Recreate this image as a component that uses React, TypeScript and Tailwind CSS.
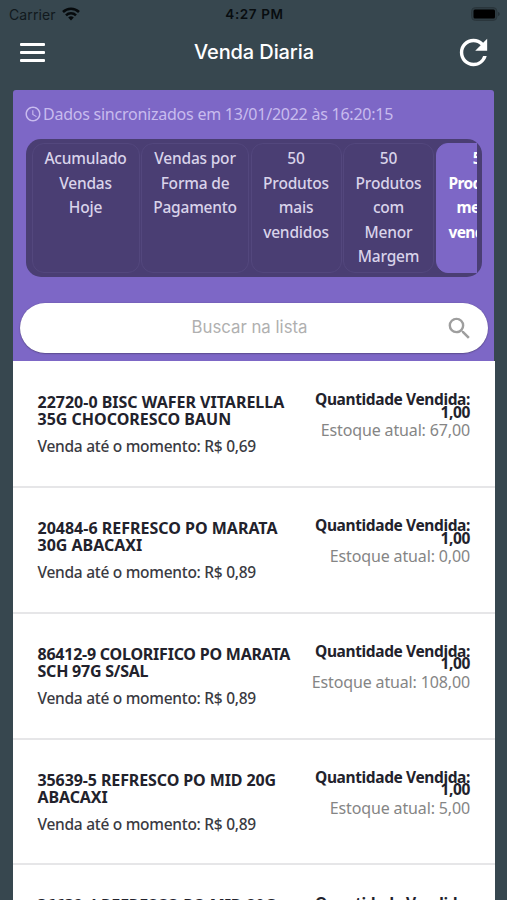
import clsx from "clsx";
import { MdAccessTime, MdRefresh, MdSearch } from "react-icons/md";

type Product = {
  name: [string, string];
  sold: string;
  quantity: string;
  stock: string;
  tracking?: string;
};

const tabs = [
  { lines: ["Acumulado", "Vendas", "Hoje"], width: "w-[108px]" },
  { lines: ["Vendas por", "Forma de", "Pagamento"], width: "w-[108px]" },
  { lines: ["50", "Produtos", "mais", "vendidos"], width: "w-[91px]" },
  { lines: ["50", "Produtos", "com", "Menor", "Margem"], width: "w-[91px]" },
  { lines: ["50", "Produtos", "menos", "vendidos"], width: "w-[91px]", active: true },
];

const products: Product[] = [
  { name: ["22720-0 BISC WAFER VITARELLA", "35G CHOCORESCO BAUN"], sold: "0,69", quantity: "1,00", stock: "67,00" },
  { name: ["20484-6 REFRESCO PO MARATA", "30G ABACAXI"], sold: "0,89", quantity: "1,00", stock: "0,00" },
  {
    name: ["86412-9 COLORIFICO PO MARATA", "SCH 97G S/SAL"],
    sold: "0,89",
    quantity: "1,00",
    stock: "108,00",
    tracking: "tracking-[-0.23px]",
  },
  {
    name: ["35639-5 REFRESCO PO MID 20G", "ABACAXI"],
    sold: "0,89",
    quantity: "1,00",
    stock: "5,00",
    tracking: "tracking-[-0.1px]",
  },
  {
    name: ["36639-4 REFRESCO PO MID 20G", "ABACAXI"],
    sold: "0,89",
    quantity: "1,00",
    stock: "5,00",
    tracking: "tracking-[-0.1px]",
  },
];

function WifiIcon() {
  return (
    <svg width="18" height="14" viewBox="0 0 18 14" fill="none" stroke="#060a0c" strokeWidth="2.5">
      <path d="M1 5a11.4 11.4 0 0 1 16 0" />
      <path d="M4 8.3a7.1 7.1 0 0 1 10 0" />
      <path d="M9 13.4 6.2 10.6a4 4 0 0 1 5.6 0z" fill="#060a0c" stroke="none" />
    </svg>
  );
}

function BatteryIcon() {
  return (
    <svg width="29" height="14" viewBox="0 0 29 14">
      <rect x="0.5" y="0.5" width="25.5" height="13" rx="4" fill="#2f3c43" stroke="#2a363c" />
      <rect x="2.5" y="2.5" width="21.5" height="9" rx="1.5" fill="#000" />
      <path d="M27.2 5v4c.9-.4 1.4-1.1 1.4-2s-.5-1.6-1.4-2z" fill="#222d33" />
    </svg>
  );
}

function StatusBar() {
  return (
    <div className="grid h-7 grid-cols-3 items-center pr-[7px] pl-[9px] font-['Inter',sans-serif] text-[14px]">
      <div className="flex items-center gap-[6px] text-[#11191d]">
        <span className="tracking-[0.1px]">Carrier</span>
        <WifiIcon />
      </div>
      <span className="text-center text-[13.5px] font-semibold tracking-[0.6px] text-[#080d10]">4:27 PM</span>
      <div className="flex justify-end">
        <BatteryIcon />
      </div>
    </div>
  );
}

function Header() {
  return (
    <header className="flex h-[62px] items-start justify-between pr-[13px] pl-[20px]">
      <button className="mt-[15px] flex w-[25px] flex-col gap-[5px]" aria-label="Menu">
        <span className="h-[3px] rounded-[1px] bg-white" />
        <span className="h-[3px] rounded-[1px] bg-white" />
        <span className="h-[3px] rounded-[1px] bg-white" />
      </button>
      <h1 className="mt-[10px] ml-[10px] font-['Inter',sans-serif] text-[20px] leading-7 font-medium tracking-[-0.1px] text-white">
        Venda Diaria
      </h1>
      <button className="mt-1" aria-label="Atualizar">
        <MdRefresh size={41} color="#fff" />
      </button>
    </header>
  );
}

function Tabs() {
  return (
    <div className="mx-[12.5px] mt-[13px] h-[138px] overflow-hidden rounded-[15px] bg-[#4a3e73] pt-1 pr-[4.5px] pl-[6px]">
      <div className="flex gap-[1.5px] overflow-hidden">
        {tabs.map((tab) => (
          <button
            key={tab.lines.join(" ")}
            className={clsx(
              "flex h-[130px] shrink-0 flex-col items-center rounded-xl border pt-[2px] text-[15.5px] leading-[24.5px]",
              tab.width,
              tab.active
                ? "border-[#7d67c6] bg-[#7d67c6] font-bold tracking-[-0.6px] text-white"
                : "border-[#53477d] font-medium tracking-[-0.2px] text-[#d9d3ea]",
            )}
          >
            {tab.lines.map((line) => (
              <span key={line}>{line}</span>
            ))}
          </button>
        ))}
      </div>
    </div>
  );
}

function SearchField() {
  return (
    <div className="mx-[6.5px] mt-[26px] flex h-[50px] items-center rounded-full bg-white pr-[14px] pl-[35px] shadow-[0_0.5px_1.5px_rgba(0,0,0,0.45)]">
      <input
        className="min-w-0 flex-1 pb-px text-center font-['Inter',sans-serif] text-[16.8px] outline-none placeholder:text-[#b0b0b0]"
        placeholder="Buscar na lista"
      />
      <MdSearch size={29} color="#9e9e9e" />
    </div>
  );
}

function ProductRow({ product }: { product: Product }) {
  return (
    <li className="flex h-[125.86px] justify-between border-b-2 border-[#e6e6e8] px-[25px]">
      <div className="pt-8 whitespace-nowrap text-[#22222c]">
        <p className={clsx("text-[16px] leading-[17px] font-bold", product.tracking)}>
          {product.name[0]}
          <br />
          {product.name[1]}
        </p>
        <p className="mt-[6px] text-[15.5px] leading-6 font-medium tracking-[-0.28px] text-[#3a3a42]">
          Venda até o momento: R$ {product.sold}
        </p>
      </div>
      <div className="pt-[31.2px] text-right whitespace-nowrap">
        <p className="text-[15.5px] leading-[12.5px] font-bold tracking-[-0.38px] text-[#22222c]">
          Quantidade Vendida:
          <br />
          {product.quantity}
        </p>
        <p className="text-[16px] leading-6 tracking-[-0.14px] text-[#858585]">Estoque atual: {product.stock}</p>
      </div>
    </li>
  );
}

export default function App() {
  return (
    <main className="h-[900px] w-[507px] overflow-hidden bg-[#37474f] font-['Noto_Sans',sans-serif]">
      <StatusBar />
      <Header />
      <section className="mx-[13px] h-[271px] rounded-t-[3px] bg-[#7d67c6] pt-[13px]">
        <p className="flex items-center gap-px pl-[11px] text-[16px] leading-[23px] tracking-[-0.24px] text-[#c8bbee]">
          <MdAccessTime size={18} className="-mt-0.5" />
          Dados sincronizados em 13/01/2022 às 16:20:15
        </p>
        <Tabs />
        <SearchField />
      </section>
      <ul className="mr-[12px] ml-[12.5px] bg-white pt-[1px]">
        {products.map((product) => (
          <ProductRow key={product.name[0]} product={product} />
        ))}
      </ul>
    </main>
  );
}
